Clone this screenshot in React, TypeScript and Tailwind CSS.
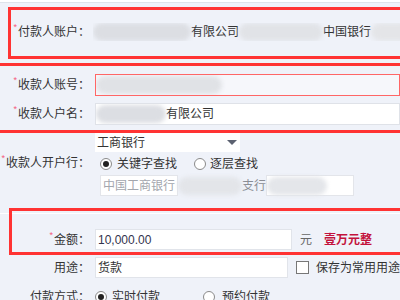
import React from "react";

// ─── small bits ────────────────────────────────────────────
function Star() {
  return <span className="text-[9px] leading-none text-[#f5587b] align-top mr-[1px]">*</span>;
}

function Label({ text, required = false }: { text: string; required?: boolean }) {
  return (
    <div className="w-[90px] shrink-0 text-right text-[12px] text-[#333] whitespace-nowrap">
      {required && <Star />}
      {text}：
    </div>
  );
}

function Blob({ w, className = "" }: { w: number | string; className?: string }) {
  return (
    <div
      className={`h-[18px] shrink-0 rounded-full bg-[#dcdee3] blur-[2px] ${className}`}
      style={{ width: w }}
    />
  );
}

function Radio({ checked = false }: { checked?: boolean }) {
  return (
    <span className="flex h-[12px] w-[12px] shrink-0 items-center justify-center rounded-full border border-[#8a8a8a] bg-white">
      {checked && <span className="h-[6px] w-[6px] rounded-full bg-[#222]" />}
    </span>
  );
}

export default function App() {
  return (
    <div className="relative h-[300px] w-[400px] overflow-hidden bg-[#eff2f9] font-['Liberation_Sans','Noto_Sans_CJK_SC',sans-serif] text-[12px] text-[#333]">
      {/* top strip */}
      <div className="h-[2px] bg-white" />
      <div className="h-px bg-[#dfe3ea]" />

      {/* 付款人账户 */}
      <div className="flex h-[58px] items-center">
        <Label text="付款人账户" required />
        <div className="ml-[3px] flex flex-1 items-center overflow-hidden">
          <Blob w={98} />
          <span className="shrink-0 whitespace-nowrap">有限公司</span>
          <Blob w={84} className="bg-[#e1e3e7]" />
          <span className="shrink-0 whitespace-nowrap">中国银行</span>
          <Blob w={40} className="bg-[#e4e5e8]" />
        </div>
      </div>

      {/* 收款人账号 */}
      <div className="mt-[13px] flex h-[22px] items-center">
        <Label text="收款人账号" required />
        <div className="ml-[5px] flex h-full flex-1 items-center overflow-hidden border border-[#f66] bg-[#f6f7fb]">
          <Blob w={126} className="bg-[#e0e2e6]" />
        </div>
      </div>

      {/* 收款人户名 */}
      <div className="mt-[7px] flex h-[22px] items-center">
        <Label text="收款人户名" required />
        <div className="ml-[5px] flex h-full flex-1 items-center overflow-hidden border border-[#dfe2e8] bg-white">
          <Blob w={70} className="bg-[#dcdde2]" />
          <span className="whitespace-nowrap">有限公司</span>
        </div>
      </div>

      {/* 收款人开户行 */}
      <div className="mt-[8px] flex">
        <div className="flex items-center pb-[3px]">
          <Label text="收款人开户行" required />
        </div>
        <div className="ml-[5px] flex flex-col">
          <div className="flex h-[19px] w-[145px] items-center justify-between bg-white pl-[2px] pr-[3px]">
            <span className="whitespace-nowrap">工商银行</span>
            <svg width="10" height="6" viewBox="0 0 10 6">
              <path d="M0 0 L10 0 L5 5 Z" fill="#5b6170" />
            </svg>
          </div>
          <div className="mt-[3px] flex h-[18px] items-center">
            <span className="ml-[5px]"><Radio checked /></span>
            <span className="ml-[5px] whitespace-nowrap">关键字查找</span>
            <span className="ml-[17px]"><Radio /></span>
            <span className="ml-[4px] whitespace-nowrap">逐层查找</span>
          </div>
          <div className="mt-[2px] flex h-[21px] items-center">
            <div className="ml-[5px] flex h-full w-[78px] shrink-0 items-center overflow-hidden whitespace-nowrap border border-[#e3e5ea] bg-white pl-[2px] text-[#a3a6ad]">
              中国工商银行
            </div>
            <Blob w={64} className="bg-[#e3e5e9]" />
            <span className="whitespace-nowrap text-[#8a8d94]">支行</span>
            <div className="flex h-full w-[88px] items-center border border-[#e3e5ea] bg-white">
              <Blob w={60} className="bg-[#e4e6ea]" />
            </div>
          </div>
        </div>
      </div>

      {/* separator */}
      <div className="mt-[17px] h-px bg-white" />

      {/* 金额 */}
      <div className="mt-[15px] flex h-[21px] items-center">
        <Label text="金额" required />
        <div className="ml-[5px] flex h-full w-[197px] items-center border border-[#e1e4ea] bg-white pl-[2px] text-[#33334d]">
          10,000.00
        </div>
        <span className="ml-[8px] text-[#666]">元</span>
        <span className="ml-[12px] whitespace-nowrap font-bold text-[#c3123c]">壹万元整</span>
      </div>

      {/* 用途 */}
      <div className="mt-[7px] flex h-[21px] items-center">
        <Label text="用途" />
        <div className="ml-[5px] flex h-full w-[197px] items-center border border-[#e1e4ea] bg-white pl-[2px]">
          货款
        </div>
        <span className="ml-[8px] h-[13px] w-[13px] shrink-0 border border-[#777] bg-white" />
        <span className="ml-[7px] whitespace-nowrap">保存为常用用途</span>
      </div>

      {/* 付款方式 */}
      <div className="mt-[10px] flex h-[18px] items-center">
        <Label text="付款方式" />
        <span className="ml-[5px]"><Radio checked /></span>
        <span className="ml-[5px] whitespace-nowrap">实时付款</span>
        <span className="ml-[43px]"><Radio /></span>
        <span className="ml-[7px] whitespace-nowrap">预约付款</span>
      </div>

      {/* Annotation boxes drawn over the form */}
      <div className="pointer-events-none absolute left-[8px] right-[-10px] top-[7px] h-[52px] border-[3px] border-[#ff3333]" />
      <div className="pointer-events-none absolute left-[-10px] right-[-10px] top-[63px] h-[70px] border-[3px] border-[#ff3333]" />
      <div className="pointer-events-none absolute left-[9px] right-[-10px] top-[208px] h-[47px] border-[3px] border-[#ff3333]" />
    </div>
  );
}
